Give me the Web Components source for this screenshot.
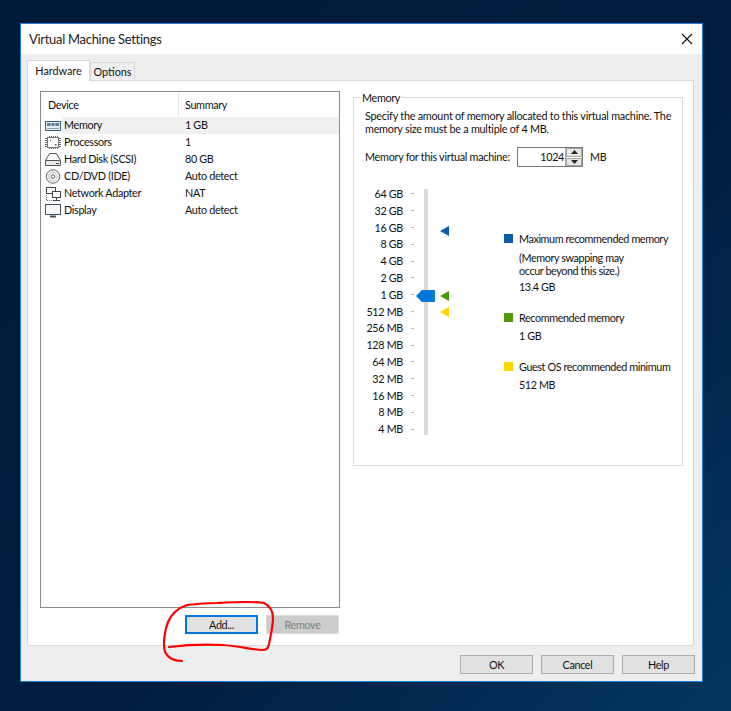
<!DOCTYPE html>
<html>
<head>
<meta charset="utf-8">
<title>Virtual Machine Settings</title>
<style>
html, body { margin: 0; padding: 0; height: 100%; }
body {
    overflow: hidden;
    background: linear-gradient(135deg, #001a3a 0%, #001c3e 55%, #04365f 100%);
    font-family: Lato, Roboto, sans-serif;
    font-size: 10.8px;
    letter-spacing: -0.33px;
    line-height: 14px;
    color: #111;
}
</style>
</head>
<body>
<vm-dialog heading="Virtual Machine Settings">
    <device-list slot="left">
        <device-row name="Memory" summary="1 GB" icon="memory" selected></device-row>
        <device-row name="Processors" summary="1" icon="cpu"></device-row>
        <device-row name="Hard Disk (SCSI)" summary="80 GB" icon="disk"></device-row>
        <device-row name="CD/DVD (IDE)" summary="Auto detect" icon="cd"></device-row>
        <device-row name="Network Adapter" summary="NAT" icon="net"></device-row>
        <device-row name="Display" summary="Auto detect" icon="display"></device-row>
    </device-list>
    <div slot="left-buttons" style="display:flex;justify-content:flex-end;gap:8px;margin:7px 0 0 0;padding-right:1px">
        <vm-button focused>Add...</vm-button>
        <vm-button disabled>Remove</vm-button>
    </div>
    <memory-panel slot="right"></memory-panel>
    <vm-button slot="footer">OK</vm-button>
    <vm-button slot="footer">Cancel</vm-button>
    <vm-button slot="footer">Help</vm-button>
</vm-dialog>
<red-circle></red-circle>

<script>
class VmDialog extends HTMLElement {
    constructor() {
        super();
        const shadow = this.attachShadow({ mode: 'open' });
        shadow.innerHTML = `
            <style>
                :host {
                    display: block;
                    box-sizing: border-box;
                    width: 683px;
                    height: 659px;
                    margin: 23px 0 0 20px;
                    border: 1px solid #1a7fd6;
                    background: #eeeeee;
                }
                .title {
                    display: flex;
                    align-items: center;
                    justify-content: space-between;
                    height: 30px;
                    padding: 0 9px 0 8px;
                    background: #fff;
                    font-size: 13px;
                    letter-spacing: -0.3px;
                    color: #222;
                }
                .title svg { display: block; }
                .tabs {
                    display: flex;
                    align-items: flex-end;
                    height: 26px;
                    padding-left: 6px;
                    letter-spacing: 0;
                }
                .tab {
                    box-sizing: border-box;
                    border: 1px solid #d9d9d9;
                    border-bottom: 0;
                    display: flex;
                    align-items: center;
                    justify-content: center;
                }
                .tab.on {
                    width: 63px;
                    height: 21px;
                    background: #fff;
                    margin-bottom: -1px;
                    position: relative;
                }
                .tab.off {
                    width: 45px;
                    height: 18px;
                    background: #efefef;
                    padding-top: 1px;
                }
                .panel {
                    box-sizing: border-box;
                    width: 667px;
                    height: 566px;
                    margin-left: 6px;
                    border: 1px solid #d9d9d9;
                    background: #fff;
                    padding: 10px 9px 0 12px;
                    display: grid;
                    grid-template-columns: 300px 330px;
                    column-gap: 13px;
                    align-items: start;
                }
                .footer {
                    display: flex;
                    justify-content: flex-end;
                    gap: 8px;
                    padding: 9px 7px 0 0;
                }
            </style>
            <div class="title">
                <span>${this.getAttribute('heading')}</span>
                <svg width="12" height="12" viewBox="0 0 12 12"><path d="M1 1l10 10M11 1L1 11" stroke="#111" stroke-width="1.1" fill="none"/></svg>
            </div>
            <div class="tabs">
                <div class="tab on">Hardware</div>
                <div class="tab off">Options</div>
            </div>
            <div class="panel">
                <div>
                    <slot name="left"></slot>
                    <slot name="left-buttons"></slot>
                </div>
                <slot name="right"></slot>
            </div>
            <div class="footer"><slot name="footer"></slot></div>
        `;
    }
}

class VmButton extends HTMLElement {
    constructor() {
        super();
        const shadow = this.attachShadow({ mode: 'open' });
        shadow.innerHTML = `
            <style>
                :host {
                    display: flex;
                    box-sizing: border-box;
                    align-items: center;
                    justify-content: center;
                    width: 73px;
                    height: 19px;
                    border: 1px solid #adadad;
                    background: #e1e1e1;
                    color: #111;
                }
                :host([focused]) { border: 2px solid #0078d7; }
                :host([disabled]) { border-color: #dcdcdc; background: #cccccc; color: #808080; }
            </style>
            <slot></slot>
        `;
    }
}

const deviceIcons = {
    memory: `<rect x="1.5" y="3.5" width="15" height="9" fill="#e3edf5" stroke="#3a5f80"/><path d="M3 5h12v3H3z" fill="#5d7fa0"/><path d="M7 5v3M11 5v3" stroke="#c7d6e3"/><path d="M3 10.5h12" stroke="#8aa2b8"/>`,
    cpu: `<rect x="3.5" y="2.5" width="11" height="10" fill="#fff" stroke="#777"/><path d="M5.5 1v1M7.5 1v1M9.5 1v1M11.5 1v1M13.5 1v1M5.5 13v1M7.5 13v1M9.5 13v1M11.5 13v1M13.5 13v1M1 3.5h2M1 5.5h2M1 7.5h2M1 9.5h2M1 11.5h2M15 3.5h2M15 5.5h2M15 7.5h2M15 9.5h2M15 11.5h2" stroke="#666"/><path d="M6 5h1v1H6zM11 9h1.5v1.5H11z" fill="#444"/>`,
    disk: `<path d="M5.5 1.5h7l4 7v5h-15v-5z" fill="#fff" stroke="#555"/><path d="M1.5 8.5h15" stroke="#555"/><path d="M2 9h14v4H2z" fill="#ececec"/><path d="M12 11.5h3" stroke="#555"/>`,
    cd: `<circle cx="9" cy="7.5" r="6.7" fill="#f6f6f6" stroke="#666"/><circle cx="9" cy="7.5" r="4.3" fill="none" stroke="#c4c4c4"/><circle cx="9" cy="7.5" r="1.8" fill="#fff" stroke="#555"/>`,
    net: `<rect x="2.5" y="1.5" width="9" height="6" fill="#fff" stroke="#444"/><rect x="8.5" y="5.5" width="8" height="6" fill="#fff" stroke="#444"/><path d="M12.5 12v2M9 14.5h7" stroke="#444"/><path d="M2.5 9v5.5H8" stroke="#777" stroke-dasharray="1 1" fill="none"/>`,
    display: `<rect x="1.5" y="1.5" width="15" height="10" fill="#f7f7f7" stroke="#3f5566"/><path d="M6 13.5h6" stroke="#3f5566" stroke-width="2"/>`
};

class DeviceList extends HTMLElement {
    constructor() {
        super();
        const shadow = this.attachShadow({ mode: 'open' });
        shadow.innerHTML = `
            <style>
                :host {
                    display: block;
                    box-sizing: border-box;
                    height: 517px;
                    border: 1px solid #8a8a8a;
                    background: #fff;
                }
                .head {
                    display: grid;
                    grid-template-columns: 137px 1fr;
                    height: 25px;
                    align-items: center;
                }
                .head span { padding-left: 7px; height: 100%; display: flex; align-items: center; box-sizing: border-box; }
                .head span + span { border-left: 1px solid #e4e4e4; padding-left: 6px; height: 24px; }
            </style>
            <div class="head"><span>Device</span><span>Summary</span></div>
            <slot></slot>
        `;
    }
}

class DeviceRow extends HTMLElement {
    constructor() {
        super();
        const shadow = this.attachShadow({ mode: 'open' });
        shadow.innerHTML = `
            <style>
                :host {
                    display: grid;
                    grid-template-columns: 21px 116px 1fr;
                    height: 17px;
                    align-items: center;
                }
                :host([selected]) .name, :host([selected]) .sum { background: #f0f0f0; }
                svg { display: block; margin-left: 3px; }
                .name, .sum { height: 17px; line-height: 16px; white-space: nowrap; }
                .name { padding-left: 2px; }
                .sum { padding-left: 7px; }
            </style>
            <svg width="18" height="15" viewBox="0 0 18 15">${deviceIcons[this.getAttribute('icon')]}</svg>
            <div class="name">${this.getAttribute('name')}</div>
            <div class="sum">${this.getAttribute('summary')}</div>
        `;
    }
}

class MemoryScale extends HTMLElement {
    constructor() {
        super();
        const shadow = this.attachShadow({ mode: 'open' });
        const sizes = ['64 GB','32 GB','16 GB','8 GB','4 GB','2 GB','1 GB','512 MB','256 MB','128 MB','64 MB','32 MB','16 MB','8 MB','4 MB'];
        shadow.innerHTML = `
            <style>
                :host {
                    display: block;
                    position: relative;
                    width: 100px;
                    height: 252px;
                }
                .rows {
                    display: grid;
                    grid-auto-rows: 16.8px;
                }
                .row {
                    display: grid;
                    grid-template-columns: 38px 3px;
                    column-gap: 8px;
                    align-items: center;
                    text-align: right;
                    white-space: nowrap;
                }
                .row i { height: 1px; background: #b5b5b5; }
                .track {
                    position: absolute;
                    left: 59px; top: 3px;
                    width: 4px; height: 246px;
                    background: #d6dbdb;
                }
                .thumb { position: absolute; left: 51px; top: 104px; }
                .mark { position: absolute; left: 75px; }
                svg { display: block; }
            </style>
            <div class="rows">
                ${sizes.map(s => `<div class="row"><span>${s}</span><i></i></div>`).join('')}
            </div>
            <div class="track"></div>
            <svg class="thumb" width="19" height="12" viewBox="0 0 19 12"><path d="M6 0h13v12H6L0 6z" fill="#0078d7"/></svg>
            <svg class="mark" style="top:40px" width="10" height="10" viewBox="0 0 10 10"><path d="M0 5l9-5v10z" fill="#0a5fa8"/></svg>
            <svg class="mark" style="top:105px" width="10" height="10" viewBox="0 0 10 10"><path d="M0 5l9-5v10z" fill="#4e9a06"/></svg>
            <svg class="mark" style="top:121px" width="10" height="10" viewBox="0 0 10 10"><path d="M0 5l9-5v10z" fill="#ffd800"/></svg>
        `;
    }
}

class LegendItem extends HTMLElement {
    constructor() {
        super();
        const shadow = this.attachShadow({ mode: 'open' });
        shadow.innerHTML = `
            <style>
                :host {
                    display: grid;
                    grid-template-columns: 9px 1fr;
                    column-gap: 6px;
                    white-space: nowrap;
                }
                .swatch { width: 9px; height: 9px; margin-top: 2px; background: ${this.getAttribute('color')}; }
                ::slotted(p) { margin: 0; }
            </style>
            <div class="swatch"></div>
            <div><slot></slot></div>
        `;
    }
}

class MemoryPanel extends HTMLElement {
    constructor() {
        super();
        const shadow = this.attachShadow({ mode: 'open' });
        shadow.innerHTML = `
            <style>
                :host {
                    display: block;
                    box-sizing: border-box;
                    position: relative;
                    height: 369px;
                    margin-top: 6px;
                    border: 1px solid #dcdcdc;
                    padding: 11px 11px 0 11px;
                }
                .legend-title {
                    position: absolute;
                    left: 7px; top: -7px;
                    padding: 0 1px;
                    background: #fff;
                }
                .intro { line-height: 13px; white-space: nowrap; letter-spacing: -0.23px; }
                .amount {
                    display: flex;
                    align-items: center;
                    height: 20px;
                    margin-top: 12px;
                }
                .amount .label { width: 152px; white-space: nowrap; letter-spacing: -0.27px; }
                .field {
                    box-sizing: border-box;
                    display: flex;
                    width: 66px;
                    height: 20px;
                    border: 1px solid #777;
                    background: #fff;
                }
                .value { flex: 1; text-align: right; padding-right: 1px; line-height: 18px; }
                .spin {
                    width: 16px;
                    display: grid;
                    grid-template-rows: 1fr 1fr;
                    gap: 1px;
                    background: #fff;
                    border-left: 1px solid #aaa;
                }
                .spin div { background: #e6e6e6; border: 1px solid #a8a8a8; display: flex; align-items: center; justify-content: center; }
                .unit { margin-left: 7px; }
                .lower {
                    display: grid;
                    grid-template-columns: 139px 1fr;
                    margin-top: 18.6px;
                }
                .legend { padding-top: 46px; letter-spacing: -0.4px; }
                p { margin: 0; }
            </style>
            <div class="legend-title">Memory</div>
            <div class="intro">Specify the amount of memory allocated to this virtual machine. The<br>memory size must be a multiple of 4 MB.</div>
            <div class="amount">
                <span class="label">Memory for this virtual machine:</span>
                <div class="field">
                    <div class="value">1024</div>
                    <div class="spin">
                        <div><svg width="7" height="4" viewBox="0 0 7 4"><path d="M3.5 0L7 4H0z" fill="#222"/></svg></div>
                        <div><svg width="7" height="4" viewBox="0 0 7 4"><path d="M0 0h7L3.5 4z" fill="#222"/></svg></div>
                    </div>
                </div>
                <span class="unit">MB</span>
            </div>
            <div class="lower">
                <memory-scale></memory-scale>
                <div class="legend">
                    <legend-item color="#0a5fa8" style="height:79px">
                        <p>Maximum recommended memory</p>
                        <p style="margin-top:5px;line-height:13px">(Memory swapping may<br>occur beyond this size.)</p>
                        <p style="margin-top:3px">13.4 GB</p>
                    </legend-item>
                    <legend-item color="#4e9a06" style="height:49px">
                        <p>Recommended memory</p>
                        <p style="margin-top:4px">1 GB</p>
                    </legend-item>
                    <legend-item color="#ffd800">
                        <p>Guest OS recommended minimum</p>
                        <p style="margin-top:4px">512 MB</p>
                    </legend-item>
                </div>
            </div>
        `;
    }
}

class RedCircle extends HTMLElement {
    constructor() {
        super();
        const shadow = this.attachShadow({ mode: 'open' });
        shadow.innerHTML = `
            <style>
                :host { position: absolute; left: 0; top: 0; pointer-events: none; }
                svg { display: block; }
            </style>
            <svg width="731" height="711" viewBox="0 0 731 711">
                <path d="M169 647C185 645 205 644 222 645C240 646 252 650 263 650C268 650 268 647 269 644C271 634 273 626 273 618C273 610 270 606 264 603C250 601 235 602 217 603C205 603 195 604 187 605C178 608 172 613 168 622C164 632 163 645 165 652C168 658 174 661 182 661" fill="none" stroke="#f00" stroke-width="2.2" stroke-linecap="round"/>
            </svg>
        `;
    }
}

customElements.define('vm-dialog', VmDialog);
customElements.define('vm-button', VmButton);
customElements.define('device-list', DeviceList);
customElements.define('device-row', DeviceRow);
customElements.define('memory-scale', MemoryScale);
customElements.define('legend-item', LegendItem);
customElements.define('memory-panel', MemoryPanel);
customElements.define('red-circle', RedCircle);
</script>
</body>
</html>
